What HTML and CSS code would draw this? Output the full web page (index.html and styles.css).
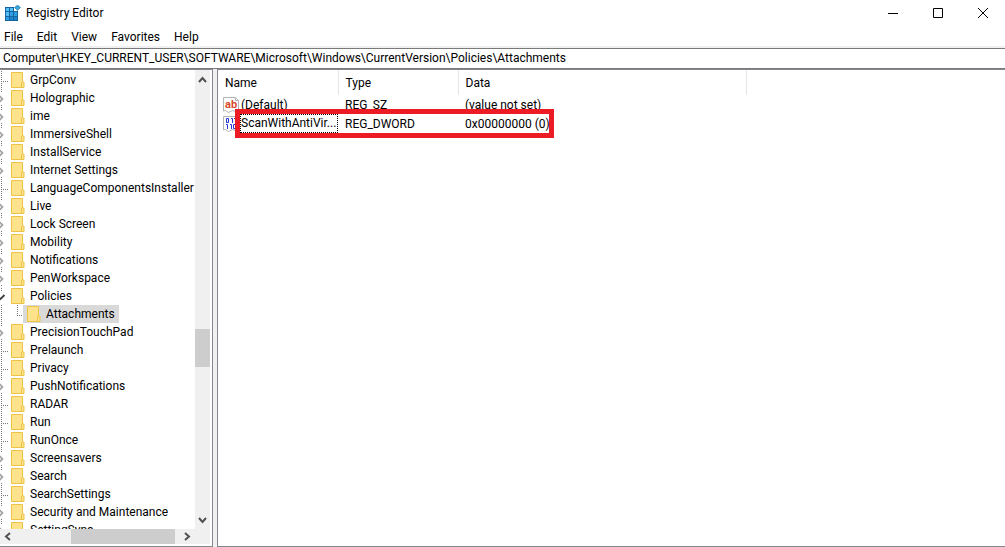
FILE: index.html
```
<!DOCTYPE html>
<html lang="en">
  <head>
    <meta charset="UTF-8" />
    <meta name="viewport" content="width=device-width, initial-scale=1.0" />
    <title>Registry Editor</title>
    <link rel="stylesheet" href="styles.css">
  </head>
  <body>
    <!-- shared icons -->
    <svg class="sprite" aria-hidden="true">
      <symbol id="folder" viewBox="0 0 14 18">
        <path d="M.5 1.500h11v9.500h1.500v5.500h-12.500z" fill="#ffe28c" stroke="#ecc344" />
        <path d="M10.500 16v-4.500l1-1" fill="none" stroke="#ecc344" />
      </symbol>
      <symbol id="leaf" viewBox="0 0 11 18">
        <path d="M1.500 0v18M3 10.500h6" fill="none" stroke="#777" stroke-dasharray="1 1" />
      </symbol>
      <symbol id="line" viewBox="0 0 11 18">
        <path d="M1.500 0v18" fill="none" stroke="#777" stroke-dasharray="1 1" />
      </symbol>
      <symbol id="last" viewBox="0 0 8 18">
        <path d="M1.500 0v10M1 10.500h6" fill="none" stroke="#777" stroke-dasharray="1 1" />
      </symbol>
      <symbol id="closed" viewBox="0 0 11 18">
        <path d="M1 .5h1M1 2.500h1M1 16.500h1" stroke="#777" />
        <path d="M-1 6.500l3.500 3.500l-3.500 3.500" fill="none" stroke="#a6a6a6" stroke-width="1.800" />
      </symbol>
      <symbol id="open" viewBox="0 0 11 18">
        <path d="M1 1.500h1M1 3.500h1" stroke="#777" />
        <path d="M-1 10.500l1.500 1.500l4-4" fill="none" stroke="#404040" stroke-width="1.800" />
      </symbol>
    </svg>

    <header class="title-bar">
      <svg class="app-icon" width="16" height="16" viewBox="0 0 16 16" aria-hidden="true">
        <path d="M0 2h9v4h4v10h-13z" fill="#1565a0" />
        <path d="M1 3h3v3h-3zM5 3h3v3h-3zM1 7h3v4h-3z" fill="#53c1f5" />
        <path d="M5 7h3v4h-3zM9 7h3v4h-3zM1 12h3v3h-3z" fill="#2f9fe0" />
        <path d="M5 12h3v3h-3zM9 12h3v3h-3z" fill="#1b84cc" />
        <path d="M12.500 0l3 2.500l-3 3l-3-3z" fill="#3aa5dc" stroke="#1b6fa8" stroke-width=".6" />
      </svg>
      <h1>Registry Editor</h1>
      <div class="window-buttons">
        <button type="button" aria-label="Minimize">
          <svg width="10" height="10"><path d="M0 5.500h10" stroke="#000" /></svg>
        </button>
        <button type="button" aria-label="Maximize">
          <svg width="10" height="10"><path d="M.5 .5h9v9h-9z" fill="none" stroke="#000" /></svg>
        </button>
        <button type="button" aria-label="Close">
          <svg width="10" height="10"><path d="M0 0l10 10M10 0l-10 10" stroke="#000" /></svg>
        </button>
      </div>
    </header>

    <nav class="menu">
      <button type="button">File</button>
      <button type="button">Edit</button>
      <button type="button">View</button>
      <button type="button">Favorites</button>
      <button type="button">Help</button>
    </nav>

    <input class="address" type="text" aria-label="Address" value="Computer\HKEY_CURRENT_USER\SOFTWARE\Microsoft\Windows\CurrentVersion\Policies\Attachments">

    <main>
      <section class="tree-pane">
        <ul class="tree">
          <li><svg class="twig"><use href="#leaf" /></svg><svg class="folder"><use href="#folder" /></svg><span>GrpConv</span></li>
          <li><svg class="twig"><use href="#closed" /></svg><svg class="folder"><use href="#folder" /></svg><span>Holographic</span></li>
          <li><svg class="twig"><use href="#closed" /></svg><svg class="folder"><use href="#folder" /></svg><span>ime</span></li>
          <li><svg class="twig"><use href="#closed" /></svg><svg class="folder"><use href="#folder" /></svg><span>ImmersiveShell</span></li>
          <li><svg class="twig"><use href="#closed" /></svg><svg class="folder"><use href="#folder" /></svg><span>InstallService</span></li>
          <li><svg class="twig"><use href="#closed" /></svg><svg class="folder"><use href="#folder" /></svg><span>Internet Settings</span></li>
          <li><svg class="twig"><use href="#leaf" /></svg><svg class="folder"><use href="#folder" /></svg><span>LanguageComponentsInstaller</span></li>
          <li><svg class="twig"><use href="#closed" /></svg><svg class="folder"><use href="#folder" /></svg><span>Live</span></li>
          <li><svg class="twig"><use href="#closed" /></svg><svg class="folder"><use href="#folder" /></svg><span>Lock Screen</span></li>
          <li><svg class="twig"><use href="#closed" /></svg><svg class="folder"><use href="#folder" /></svg><span>Mobility</span></li>
          <li><svg class="twig"><use href="#closed" /></svg><svg class="folder"><use href="#folder" /></svg><span>Notifications</span></li>
          <li><svg class="twig"><use href="#closed" /></svg><svg class="folder"><use href="#folder" /></svg><span>PenWorkspace</span></li>
          <li><svg class="twig"><use href="#open" /></svg><svg class="folder"><use href="#folder" /></svg><span>Policies</span></li>
          <li class="child"><svg class="twig"><use href="#line" /></svg><svg class="twig"><use href="#last" /></svg><div class="selected"><svg class="folder"><use href="#folder" /></svg><span>Attachments</span></div></li>
          <li><svg class="twig"><use href="#closed" /></svg><svg class="folder"><use href="#folder" /></svg><span>PrecisionTouchPad</span></li>
          <li><svg class="twig"><use href="#leaf" /></svg><svg class="folder"><use href="#folder" /></svg><span>Prelaunch</span></li>
          <li><svg class="twig"><use href="#leaf" /></svg><svg class="folder"><use href="#folder" /></svg><span>Privacy</span></li>
          <li><svg class="twig"><use href="#closed" /></svg><svg class="folder"><use href="#folder" /></svg><span>PushNotifications</span></li>
          <li><svg class="twig"><use href="#leaf" /></svg><svg class="folder"><use href="#folder" /></svg><span>RADAR</span></li>
          <li><svg class="twig"><use href="#leaf" /></svg><svg class="folder"><use href="#folder" /></svg><span>Run</span></li>
          <li><svg class="twig"><use href="#leaf" /></svg><svg class="folder"><use href="#folder" /></svg><span>RunOnce</span></li>
          <li><svg class="twig"><use href="#closed" /></svg><svg class="folder"><use href="#folder" /></svg><span>Screensavers</span></li>
          <li><svg class="twig"><use href="#closed" /></svg><svg class="folder"><use href="#folder" /></svg><span>Search</span></li>
          <li><svg class="twig"><use href="#leaf" /></svg><svg class="folder"><use href="#folder" /></svg><span>SearchSettings</span></li>
          <li><svg class="twig"><use href="#closed" /></svg><svg class="folder"><use href="#folder" /></svg><span>Security and Maintenance</span></li>
          <li><svg class="twig"><use href="#closed" /></svg><svg class="folder"><use href="#folder" /></svg><span>SettingSync</span></li>
        </ul>
        <div class="scrollbar vertical">
          <button type="button" aria-label="Scroll up">
            <svg width="9" height="7"><path d="M1 6l3.500-4l3.500 4" /></svg>
          </button>
          <div class="track"><div class="thumb"></div></div>
          <button type="button" aria-label="Scroll down">
            <svg width="9" height="7"><path d="M1 1l3.500 4l3.500-4" /></svg>
          </button>
        </div>
        <div class="scrollbar horizontal">
          <button type="button" aria-label="Scroll left">
            <svg width="7" height="9"><path d="M6 1l-4 3.500l4 3.500" /></svg>
          </button>
          <div class="track"><div class="thumb"></div></div>
          <button type="button" aria-label="Scroll right">
            <svg width="7" height="9"><path d="M1 1l4 3.500l-4 3.500" /></svg>
          </button>
        </div>
        <div class="corner"></div>
      </section>

      <section class="values-pane">
        <table>
          <thead>
            <tr>
              <th class="col-name">Name</th>
              <th class="col-type">Type</th>
              <th class="col-data">Data</th>
              <th></th>
            </tr>
          </thead>
          <tbody>
            <tr>
              <td>
                <div class="value-name">
                  <svg width="16" height="16" viewBox="0 0 16 16" aria-hidden="true">
                    <path d="M.5 .5h12l3 3v10l-3 1l-3-1l-4 2l-3-2l-2 .5z" fill="#fff" stroke="#b4b4b4" />
                    <path d="M12.500 .5v3h3" fill="none" stroke="#b4b4b4" />
                    <text class="glyph-ab" x="2" y="11">ab</text>
                  </svg>
                  <span>(Default)</span>
                </div>
              </td>
              <td>REG_SZ</td>
              <td>(value not set)</td>
              <td></td>
            </tr>
            <tr class="marked">
              <td>
                <div class="value-name">
                  <svg width="16" height="16" viewBox="0 0 16 16" aria-hidden="true">
                    <path d="M.5 .5h12l3 3v10l-3 1l-3-1l-4 2l-3-2l-2 .5z" fill="#fff" stroke="#b4b4b4" />
                    <path d="M3.500 2.500h2v4h-2zM8 2.500h1.500v4.500M11 2.500h1.500v4.500M3 8.500h1.500v4.500M7 8.500h1.500v4.500M10.500 8.500h2v4h-2z" fill="none" stroke="#2338d8" />
                  </svg>
                  <span class="focused">ScanWithAntiVir...</span>
                </div>
                <div class="highlight"></div>
              </td>
              <td>REG_DWORD</td>
              <td>0x00000000 (0)</td>
              <td></td>
            </tr>
          </tbody>
        </table>
      </section>
    </main>
  </body>
</html>
```
FILE: styles.css
```
* {
  box-sizing: border-box;
  margin: 0;
  padding: 0;
}

:root {
  --chrome: #f0f0f0;
  --pane-border: #828790;
  --thumb: #cdcdcd;
}

body {
  display: flex;
  flex-direction: column;
  height: 100vh;
  background: #fff;
  color: #000;
  font: 12px/18px Roboto, "Open Sans", sans-serif;
}

button,
input {
  border: none;
  background: none;
  color: inherit;
  font: inherit;
}

.sprite {
  position: absolute;
  width: 0;
  height: 0;
}

/* title bar */
.title-bar {
  display: flex;
  align-items: center;
  height: 25px;
  padding-left: 5px;
}

.title-bar h1 {
  margin-left: 5px;
  font-size: 12px;
  font-weight: normal;
}

.window-buttons {
  display: flex;
  margin-left: auto;
}

.window-buttons button {
  display: flex;
  align-items: center;
  justify-content: center;
  width: 45px;
  height: 24px;
}

/* menu */
.menu {
  display: flex;
  gap: 14px;
  padding: 3px 4px 0;
}

/* address bar */
.address {
  height: 23px;
  padding: 0 3px;
  border-top: 2px solid var(--chrome);
  border-bottom: 1px solid #7a7a7a;
  box-shadow: inset 0 1px #7a7a7a;
}

/* panes */
main {
  display: flex;
  flex: 1;
  gap: 4px;
  min-height: 0;
  background: var(--chrome);
}

.tree-pane,
.values-pane {
  border: 1px solid var(--pane-border);
  border-right: none;
  background: #fff;
}

.tree-pane {
  display: grid;
  grid-template: 1fr 15px / 1fr 15px;
  width: 213px;
  padding: 0 2px 2px 0;
  border-left: none;
  border-right: 1px solid var(--pane-border);
}

.values-pane {
  flex: 1;
}

/* tree */
.tree {
  min-height: 0;
  padding-top: 1px;
  overflow: hidden;
  list-style: none;
  white-space: nowrap;
}

.tree li {
  display: flex;
  height: 18px;
}

.tree span {
  margin-left: 5px;
}

.twig {
  flex: none;
  width: 11px;
  height: 18px;
}

.folder {
  flex: none;
  width: 14px;
  height: 18px;
}

.child .twig + .twig {
  margin-left: 5px;
  width: 8px;
}

.selected {
  display: flex;
  margin-left: -1px;
  padding: 0 4px;
  background: #d9d9d9;
}

/* scrollbars */
.scrollbar {
  display: flex;
  background: var(--chrome);
}

.scrollbar button {
  display: flex;
  flex: none;
  align-items: center;
  justify-content: center;
  width: 15px;
  height: 18px;
}

.scrollbar path {
  fill: none;
  stroke: #505050;
  stroke-width: 2;
}

.track {
  display: flex;
  flex: 1;
}

.track::before,
.track::after {
  content: '';
}

.thumb {
  background: var(--thumb);
}

.vertical,
.vertical .track {
  flex-direction: column;
}

.vertical .track::before {
  flex: 57;
}

.vertical .thumb {
  flex: 9;
}

.vertical .track::after {
  flex: 34;
}

.horizontal button {
  height: 15px;
}

.horizontal .track::before {
  flex: 34;
}

.horizontal .thumb {
  flex: 63;
}

.horizontal .track::after {
  flex: 3;
}

.corner {
  background: var(--chrome);
}

/* value list */
table {
  width: 100%;
  border-collapse: collapse;
  table-layout: fixed;
}

th {
  height: 25px;
  padding-left: 7px;
  border-right: 1px solid #e5e5e5;
  font-weight: normal;
  text-align: left;
}

th:last-child {
  border-right: none;
}

.col-name {
  width: 120px;
}

.col-type {
  width: 120px;
}

.col-data {
  width: 288px;
}

td {
  position: relative;
  height: 19px;
  padding-left: 7px;
  white-space: nowrap;
}

td:first-child {
  padding-left: 5px;
}

.value-name {
  display: flex;
  align-items: center;
  gap: 1px;
}

.value-name svg {
  flex: none;
}

.value-name span {
  padding-left: 1px;
}

.value-name .focused {
  flex: 1;
  height: 19px;
  border: 1px dotted #000;
  padding-left: 0;
  line-height: 17px;
}

.glyph-ab {
  fill: #d8482b;
  font-size: 11px;
  font-weight: bold;
}

/* red frame around the changed value */
.highlight {
  position: absolute;
  z-index: 1;
  top: -5px;
  left: 17px;
  width: 319px;
  height: 29px;
  border: 5px solid #ed1c24;
}
```
